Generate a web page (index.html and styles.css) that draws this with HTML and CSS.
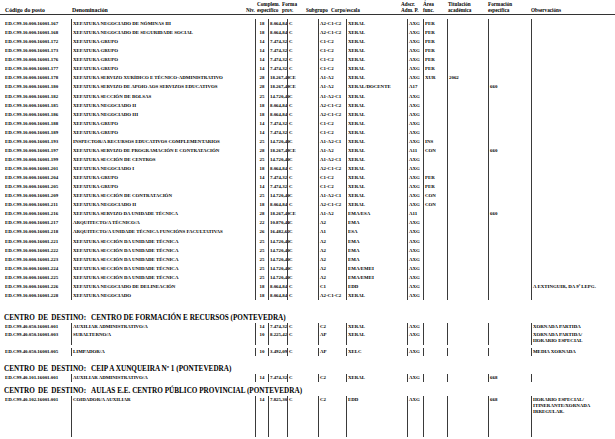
FILE: index.html
```html
<!DOCTYPE html>
<html lang="gl">
<head>
<meta charset="utf-8">
<title>Relación de postos</title>
<link rel="stylesheet" href="styles.css">
</head>
<body>
<div class="sheet">
  <div class="head">
    <div class="h h-code">Código do posto</div>
    <div class="h h-den">Denominación</div>
    <div class="h h-niv">Niv.</div>
    <div class="h h-comp">Complem.<br>específico</div>
    <div class="h h-forma">Forma<br>prov.</div>
    <div class="h h-sub">Subgrupo</div>
    <div class="h h-corpo">Corpo/escala</div>
    <div class="h h-adscr">Adscr.<br>Adm. P.</div>
    <div class="h h-area">Área<br>func.</div>
    <div class="h h-tit">Titulación<br>académica</div>
    <div class="h h-form">Formación<br>específica</div>
    <div class="h h-obs">Observacións</div>
  </div>

  <div class="block block-first">
    <div class="row"><span>ED.C99.10.000.16001.167</span><span>XEFATURA NEGOCIADO DE NÓMINAS III</span><span class="n">18</span><span class="r">8.064,84</span><span>C</span><span>A2-C1-C2</span><span>XERAL</span><span>AXG</span><span>PER</span><span></span><span></span><span></span></div>
    <div class="row"><span>ED.C99.10.000.16001.168</span><span>XEFATURA NEGOCIADO DE SEGURIDADE SOCIAL</span><span class="n">18</span><span class="r">8.064,84</span><span>C</span><span>A2-C1-C2</span><span>XERAL</span><span>AXG</span><span>PER</span><span></span><span></span><span></span></div>
    <div class="row"><span>ED.C99.10.000.16001.172</span><span>XEFATURA GRUPO</span><span class="n">14</span><span class="r">7.474,32</span><span>C</span><span>C1-C2</span><span>XERAL</span><span>AXG</span><span>PER</span><span></span><span></span><span></span></div>
    <div class="row"><span>ED.C99.10.000.16001.173</span><span>XEFATURA GRUPO</span><span class="n">14</span><span class="r">7.474,32</span><span>C</span><span>C1-C2</span><span>XERAL</span><span>AXG</span><span>PER</span><span></span><span></span><span></span></div>
    <div class="row"><span>ED.C99.10.000.16001.176</span><span>XEFATURA GRUPO</span><span class="n">14</span><span class="r">7.474,32</span><span>C</span><span>C1-C2</span><span>XERAL</span><span>AXG</span><span>PER</span><span></span><span></span><span></span></div>
    <div class="row"><span>ED.C99.10.000.16001.177</span><span>XEFATURA GRUPO</span><span class="n">14</span><span class="r">7.474,32</span><span>C</span><span>C1-C2</span><span>XERAL</span><span>AXG</span><span>PER</span><span></span><span></span><span></span></div>
    <div class="row"><span>ED.C99.10.000.16001.178</span><span>XEFATURA SERVIZO XURÍDICO E TÉCNICO-ADMINISTRATIVO</span><span class="n">28</span><span class="r">18.267,48</span><span>CE</span><span>A1-A2</span><span>XERAL</span><span>AXG</span><span>XUR</span><span>2062</span><span></span><span></span></div>
    <div class="row"><span>ED.C99.10.000.16001.180</span><span>XEFATURA SERVIZO DE APOIO AOS SERVIZOS EDUCATIVOS</span><span class="n">28</span><span class="r">18.267,48</span><span>CE</span><span>A1-A2</span><span>XERAL/DOCENTE</span><span>A17</span><span></span><span></span><span>660</span><span></span></div>
    <div class="row"><span>ED.C99.10.000.16001.182</span><span>XEFATURA SECCIÓN DE BOLSAS</span><span class="n">25</span><span class="r">14.720,40</span><span>C</span><span>A1-A2-C1</span><span>XERAL</span><span>AXG</span><span></span><span></span><span></span><span></span></div>
    <div class="row"><span>ED.C99.10.000.16001.185</span><span>XEFATURA NEGOCIADO II</span><span class="n">18</span><span class="r">8.064,84</span><span>C</span><span>A2-C1-C2</span><span>XERAL</span><span>AXG</span><span></span><span></span><span></span><span></span></div>
    <div class="row"><span>ED.C99.10.000.16001.186</span><span>XEFATURA NEGOCIADO III</span><span class="n">18</span><span class="r">8.064,84</span><span>C</span><span>A2-C1-C2</span><span>XERAL</span><span>AXG</span><span></span><span></span><span></span><span></span></div>
    <div class="row"><span>ED.C99.10.000.16001.188</span><span>XEFATURA GRUPO</span><span class="n">14</span><span class="r">7.474,32</span><span>C</span><span>C1-C2</span><span>XERAL</span><span>AXG</span><span></span><span></span><span></span><span></span></div>
    <div class="row"><span>ED.C99.10.000.16001.189</span><span>XEFATURA GRUPO</span><span class="n">14</span><span class="r">7.474,32</span><span>C</span><span>C1-C2</span><span>XERAL</span><span>AXG</span><span></span><span></span><span></span><span></span></div>
    <div class="row"><span>ED.C99.10.000.16001.193</span><span>INSPECTOR/A RECURSOS EDUCATIVOS COMPLEMENTARIOS</span><span class="n">25</span><span class="r">14.720,40</span><span>C</span><span>A1-A2-C1</span><span>XERAL</span><span>AXG</span><span>INS</span><span></span><span></span><span></span></div>
    <div class="row"><span>ED.C99.10.000.16001.197</span><span>XEFATURA SERVIZO DE PROGRAMACIÓN E CONTRATACIÓN</span><span class="n">28</span><span class="r">18.267,48</span><span>CE</span><span>A1-A2</span><span>XERAL</span><span>A11</span><span>CON</span><span></span><span>660</span><span></span></div>
    <div class="row"><span>ED.C99.10.000.16001.199</span><span>XEFATURA SECCIÓN DE CENTROS</span><span class="n">25</span><span class="r">14.720,40</span><span>C</span><span>A1-A2-C1</span><span>XERAL</span><span>AXG</span><span></span><span></span><span></span><span></span></div>
    <div class="row"><span>ED.C99.10.000.16001.201</span><span>XEFATURA NEGOCIADO I</span><span class="n">18</span><span class="r">8.064,84</span><span>C</span><span>A2-C1-C2</span><span>XERAL</span><span>AXG</span><span></span><span></span><span></span><span></span></div>
    <div class="row"><span>ED.C99.10.000.16001.204</span><span>XEFATURA GRUPO</span><span class="n">14</span><span class="r">7.474,32</span><span>C</span><span>C1-C2</span><span>XERAL</span><span>AXG</span><span>PER</span><span></span><span></span><span></span></div>
    <div class="row"><span>ED.C99.10.000.16001.205</span><span>XEFATURA GRUPO</span><span class="n">14</span><span class="r">7.474,32</span><span>C</span><span>C1-C2</span><span>XERAL</span><span>AXG</span><span>PER</span><span></span><span></span><span></span></div>
    <div class="row"><span>ED.C99.10.000.16001.209</span><span>XEFATURA SECCIÓN DE CONTRATACIÓN</span><span class="n">25</span><span class="r">14.720,40</span><span>C</span><span>A1-A2-C1</span><span>XERAL</span><span>AXG</span><span>CON</span><span></span><span></span><span></span></div>
    <div class="row"><span>ED.C99.10.000.16001.211</span><span>XEFATURA NEGOCIADO II</span><span class="n">18</span><span class="r">8.064,84</span><span>C</span><span>A2-C1-C2</span><span>XERAL</span><span>AXG</span><span>CON</span><span></span><span></span><span></span></div>
    <div class="row"><span>ED.C99.10.000.16001.216</span><span>XEFATURA SERVIZO DA UNIDADE TÉCNICA</span><span class="n">28</span><span class="r">18.267,48</span><span>CE</span><span>A1-A2</span><span>EMA/ESA</span><span>A11</span><span></span><span></span><span>660</span><span></span></div>
    <div class="row"><span>ED.C99.10.000.16001.217</span><span>ARQUITECTO/A TÉCNICO/A</span><span class="n">22</span><span class="r">10.870,44</span><span>C</span><span>A2</span><span>EMA</span><span>AXG</span><span></span><span></span><span></span><span></span></div>
    <div class="row"><span>ED.C99.10.000.16001.218</span><span>ARQUITECTO/A UNIDADE TÉCNICA FUNCIÓNS FACULTATIVAS</span><span class="n">26</span><span class="r">16.482,62</span><span>C</span><span>A1</span><span>ESA</span><span>AXG</span><span></span><span></span><span></span><span></span></div>
    <div class="row"><span>ED.C99.10.000.16001.221</span><span>XEFATURA SECCIÓN DA UNIDADE TÉCNICA</span><span class="n">25</span><span class="r">14.720,40</span><span>C</span><span>A2</span><span>EMA</span><span>AXG</span><span></span><span></span><span></span><span></span></div>
    <div class="row"><span>ED.C99.10.000.16001.222</span><span>XEFATURA SECCIÓN DA UNIDADE TÉCNICA</span><span class="n">25</span><span class="r">14.720,40</span><span>C</span><span>A2</span><span>EMA</span><span>AXG</span><span></span><span></span><span></span><span></span></div>
    <div class="row"><span>ED.C99.10.000.16001.223</span><span>XEFATURA SECCIÓN DA UNIDADE TÉCNICA</span><span class="n">25</span><span class="r">14.720,40</span><span>C</span><span>A2</span><span>EMA</span><span>AXG</span><span></span><span></span><span></span><span></span></div>
    <div class="row"><span>ED.C99.10.000.16001.224</span><span>XEFATURA SECCIÓN DA UNIDADE TÉCNICA</span><span class="n">25</span><span class="r">14.720,40</span><span>C</span><span>A2</span><span>EMA/EMEI</span><span>AXG</span><span></span><span></span><span></span><span></span></div>
    <div class="row"><span>ED.C99.10.000.16001.225</span><span>XEFATURA SECCIÓN DA UNIDADE TÉCNICA</span><span class="n">25</span><span class="r">14.720,40</span><span>C</span><span>A2</span><span>EMA/EMEI</span><span>AXG</span><span></span><span></span><span></span><span></span></div>
    <div class="row"><span>ED.C99.10.000.16001.226</span><span>XEFATURA NEGOCIADO DE DELINEACIÓN</span><span class="n">18</span><span class="r">8.064,84</span><span>C</span><span>C1</span><span>EDD</span><span>AXG</span><span></span><span></span><span></span><span>A EXTINGUIR, DA 9ª LEPG.</span></div>
    <div class="row"><span>ED.C99.10.000.16001.228</span><span>XEFATURA NEGOCIADO</span><span class="n">18</span><span class="r">8.064,84</span><span>C</span><span>A2-C1-C2</span><span>XERAL</span><span>AXG</span><span></span><span></span><span></span><span></span></div>
  </div>

  <h2 class="centro centro-a"><span class="lbl">CENTRO DE DESTINO:</span><span>CENTRO DE FORMACIÓN E RECURSOS (PONTEVEDRA)</span></h2>
  <div class="block">
    <div class="row sm"><span>ED.C99.40.050.16001.001</span><span>AUXILIAR ADMINISTRATIVO/A</span><span class="n">14</span><span class="r">7.474,32</span><span>C</span><span>C2</span><span>XERAL</span><span>AXG</span><span></span><span></span><span></span><span>XORNADA PARTIDA</span></div>
    <div class="row sm"><span>ED.C99.40.050.16001.003</span><span>SUBALTERNO/A</span><span class="n">10</span><span class="r">8.225,42</span><span>C</span><span>AP</span><span>XERAL</span><span>AXG</span><span></span><span></span><span></span><span>XORNADA PARTIDA/<br>HORARIO ESPECIAL</span></div>
  </div>
  <div class="block block-gap">
    <div class="row sm"><span>ED.C99.40.050.16001.005</span><span>LIMPADOR/A</span><span class="n">10</span><span class="r">3.492,09</span><span>C</span><span>AP</span><span>XELC</span><span>AXG</span><span></span><span></span><span></span><span>MEDIA XORNADA</span></div>
  </div>

  <h2 class="centro centro-b"><span class="lbl">CENTRO DE DESTINO:</span><span>CEIP A XUNQUEIRA Nº 1 (PONTEVEDRA)</span></h2>
  <div class="block">
    <div class="row sm"><span>ED.C99.40.101.16001.001</span><span>AUXILIAR ADMINISTRATIVO/A</span><span class="n">14</span><span class="r">7.474,32</span><span>C</span><span>C2</span><span>XERAL</span><span>AXG</span><span></span><span></span><span>668</span><span></span></div>
  </div>

  <h2 class="centro centro-c"><span class="lbl">CENTRO DE DESTINO:</span><span>AULAS E.E. CENTRO PÚBLICO PROVINCIAL (PONTEVEDRA)</span></h2>
  <div class="block">
    <div class="row sm tall"><span>ED.C99.40.102.16001.001</span><span>COIDADOR/A AUXILIAR</span><span class="n">14</span><span class="r">7.825,30</span><span>C</span><span>C2</span><span>EDD</span><span>AXG</span><span></span><span></span><span>668</span><span>HORARIO ESPECIAL/<br>ITINERANTE/XORNADA<br>IRREGULAR.</span></div>
  </div>
</div>
</body>
</html>
```

FILE: styles.css
```css
html, body {
  margin: 0;
  padding: 0;
  background: #ffffff;
}

body {
  font-family: "Liberation Serif", "Times New Roman", serif;
  font-weight: bold;
  color: #000000;
}

.sheet {
  width: 615px;
}

/* ---------- column header ---------- */
.head {
  display: grid;
  grid-template-columns: 72px 174px 11px 25px 24px 25px 70px 22px 25px 40px 43px 1fr;
  align-items: end;
  height: 13px;
  padding-bottom: 1px;
  border-bottom: 1px solid #333333;
  font-size: 5.2px;
  line-height: 5.5px;
}

.h {
  white-space: nowrap;
}

.h-code {
  padding-left: 5px;
  font-size: 5.8px;
}

.h-den {
  font-size: 5.8px;
}

/* ---------- data rows ---------- */
.block {
  display: flex;
  flex-direction: column;
}

.block-first {
  margin-top: 4px;
}

.row {
  display: grid;
  grid-template-columns: 71px 184px 13px 19px 31px 28px 61px 16px 24px 41px 43px 1fr;
  height: 9.07px;
  font-size: 4.9px;
  line-height: 9px;
}

.row > span {
  white-space: nowrap;
  border-left: 1px solid #3a3a3a;
  padding-left: 1px;
}

.row > span:first-child {
  border-left: none;
  padding-left: 5px;
}

.row > span.n {
  text-align: center;
  padding-left: 0;
}

.row > span.r {
  text-align: right;
  padding-right: 1px;
}

.row.sm {
  height: auto;
  line-height: 6px;
}

.row.sm > span {
  padding-top: 1px;
  padding-bottom: 1px;
}

.row.tall {
  height: 41px;
}

.block-gap {
  margin-top: 3px;
}

/* ---------- centre headings ---------- */
.centro {
  display: flex;
  margin: 0;
  padding-left: 4px;
  font-family: "Liberation Serif", "Times New Roman", serif;
  font-size: 7.2px;
  line-height: 9px;
  font-weight: bold;
  white-space: nowrap;
}

.centro-a {
  margin-top: 14px;
}

.centro-b {
  margin-top: 9px;
}

.centro-c {
  margin-top: 5px;
}

.centro .lbl {
  width: 87px;
  word-spacing: 1.5px;
}
```
